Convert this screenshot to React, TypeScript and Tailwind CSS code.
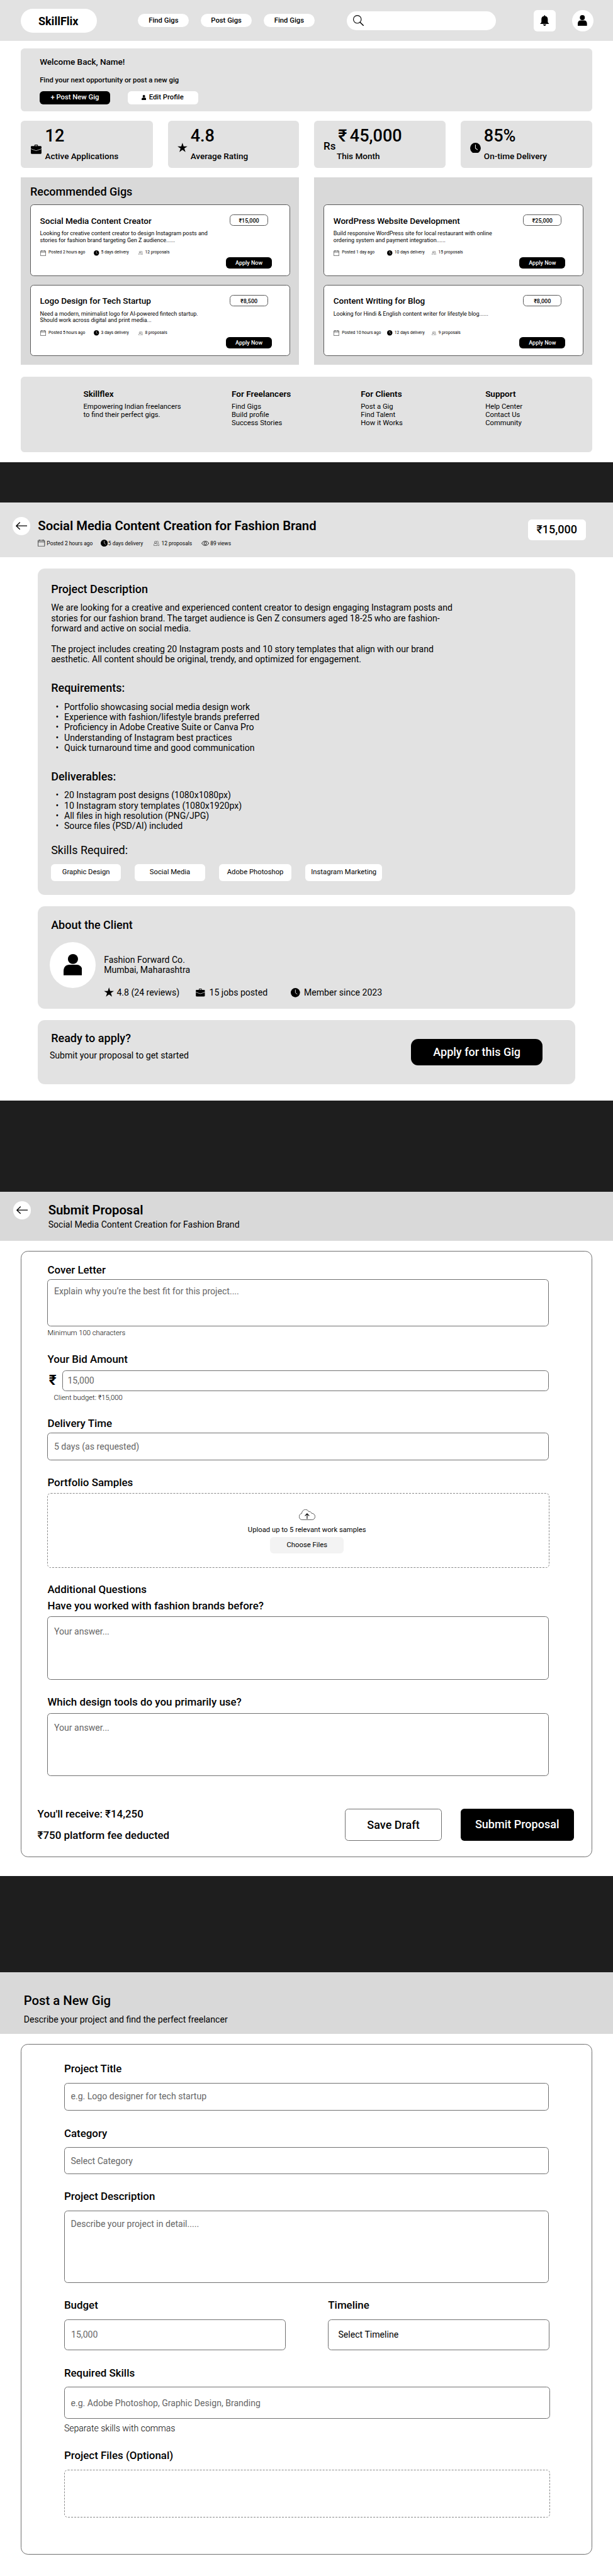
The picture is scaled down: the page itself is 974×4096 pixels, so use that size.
import React from "react";

type IconProps = { className?: string };

const UserIcon = ({ className }: IconProps) => (
  <svg viewBox="0 0 26 30" className={className} fill="#000" preserveAspectRatio="none">
    <ellipse cx="13" cy="7" rx="7" ry="7" />
    <path d="M0 30V24C0 18.5 3 15 8 15h10c5 0 8 3.500 8 9v6z" />
  </svg>
);

const BellIcon = ({ className }: IconProps) => (
  <svg viewBox="0 0 26 30" className={className} fill="#000">
    <path d="M13 0c.8 0 1.200.6 1.200 1.300v1.200C19 3 22 6.500 22 11v8c0 2 1.500 3.500 3.200 4.500V25H.8v-1.500C2.500 22.500 4 21 4 19v-8c0-4.500 3-8 7.800-8.500V1.300C11.800.6 12.200 0 13 0z" />
    <path d="M8 26.300h10L14.500 30h-3z" />
  </svg>
);

const SearchIcon = ({ className }: IconProps) => (
  <svg viewBox="0 0 30 30" className={className} fill="none" stroke="#000">
    <circle cx="12" cy="12" r="11" strokeWidth="2" />
    <path d="M19.500 20L29 29.300" strokeWidth="2.600" strokeLinecap="round" />
  </svg>
);

const BriefcaseIcon = ({ className }: IconProps) => (
  <svg viewBox="0 0 30 26" className={className} fill="#000">
    <path d="M10 4V2.500C10 1 11 0 12.500 0h5C19 0 20 1 20 2.500V4h7.500C29 4 30 5 30 6.500V11l-15 5.200L0 11V6.500C0 5 1 4 2.500 4zm2 0h6V2.300h-6z" />
    <path d="M0 12.600l15 5.200 15-5.200v10.900c0 1.500-1 2.500-2.500 2.500h-25C1 26 0 25 0 23.500z" />
  </svg>
);

const StarIcon = ({ className }: IconProps) => (
  <svg viewBox="0 0 28 26" className={className} fill="#000">
    <path d="M14 0l3.300 10H28l-8.700 6.100L22.600 26 14 19.900 5.400 26l3.300-9.900L0 10h10.700z" />
  </svg>
);

const ClockIcon = ({ className, hand = "#fff" }: IconProps & { hand?: string }) => (
  <svg viewBox="0 0 30 30" className={className}>
    <circle cx="15" cy="15" r="15" fill="#000" />
    <path d="M15 6v9.500l5.500 4" fill="none" stroke={hand} strokeWidth="2" strokeLinecap="round" />
  </svg>
);

const CalendarIcon = ({ className }: IconProps) => (
  <svg viewBox="0 0 20 20" className={className} fill="none" stroke="#000" strokeWidth="1.300">
    <rect x=".7" y="2" width="18.600" height="17.200" rx="1.500" />
    <path d="M.7 6.500h18.600M5 0v3.500M15 0v3.500" />
  </svg>
);

const PeopleIcon = ({ className }: IconProps) => (
  <svg viewBox="0 0 16 14" className={className} fill="none" stroke="#000" strokeWidth=".8">
    <circle cx="5.500" cy="4" r="3" />
    <path d="M.5 13.400v-2C.5 9 2 7.300 4.200 7h2.600c2.200.3 3.700 2 3.700 4.400v2z" />
    <path d="M8 1.400C8.600.8 9.300.5 10.200.5c1.700 0 3 1.400 3 3.200 0 1.400-.7 2.500-1.800 3 2.400.6 4.100 2.300 4.100 4.700v2h-3" />
  </svg>
);

const EyeIcon = ({ className }: IconProps) => (
  <svg viewBox="0 0 22 14" className={className} fill="none" stroke="#000" strokeWidth="1.500">
    <path d="M1 7c2.500-4 5.700-6.200 10-6.200S18.500 3 21 7c-2.500 4-5.700 6.200-10 6.200S3.500 11 1 7z" />
    <circle cx="11" cy="7" r="3.600" />
  </svg>
);

const ArrowIcon = ({ className }: IconProps) => (
  <svg viewBox="0 0 33 22" className={className} fill="none" stroke="#000" strokeWidth="2.400" strokeLinejoin="round">
    <path d="M12 1L1.500 11 12 21M1.500 11H33" />
  </svg>
);

const CloudIcon = ({ className }: IconProps) => (
  <svg viewBox="0 0 46 30" className={className} fill="none" stroke="#000">
    <path
      d="M9 29.300C4 29.300.6 25.500.6 20.500c0-4.500 2.800-8.200 7.200-9C8.500 5 13 .7 18.500.7c4 0 7.500 2.200 9 5.600 4-.5 7 1.500 8.300 4.700 5.600.3 9.600 4 9.600 9.300 0 5-3.600 9-8.600 9z"
      strokeWidth="1.100"
    />
    <path d="M23 27V13M17 18.500L23 12l6 6.500" strokeWidth="2" />
  </svg>
);

type Gig = {
  title: string;
  lines: string[];
  price: string;
  posted: string;
  delivery: string;
  proposals: string;
};

const leftGigs: Gig[] = [
  {
    title: "Social Media Content Creator",
    lines: ["Looking for creative content creator to design Instagram posts and", "stories for fashion brand targeting Gen Z audience......"],
    price: "₹15,000",
    posted: "Posted 2 hours ago",
    delivery: "5 days delivery",
    proposals: "12 proposals",
  },
  {
    title: "Logo Design for Tech Startup",
    lines: ["Need a modern, minimalist logo for AI-powered fintech startup.", "Should work across digital and print media..."],
    price: "₹8,500",
    posted: "Posted 5 hours ago",
    delivery: "3 days delivery",
    proposals: "8 proposals",
  },
];

const rightGigs: Gig[] = [
  {
    title: "WordPress Website Development",
    lines: ["Build responsive WordPress site for local restaurant with online", "ordering system and payment integration......"],
    price: "₹25,000",
    posted: "Posted 1 day ago",
    delivery: "10 days delivery",
    proposals: "15 proposals",
  },
  {
    title: "Content Writing for Blog",
    lines: ["Looking for Hindi & English content writer for lifestyle blog......"],
    price: "₹8,000",
    posted: "Posted 10 hours ago",
    delivery: "12 days delivery",
    proposals: "9 proposals",
  },
];

const GigCard = ({ gig }: { gig: Gig }) => (
  <article className="flex h-[202px] w-[733px] rounded-[10px] border border-[#5a5a5a] bg-white">
    <div className="w-[550px] shrink-0 pt-[31px] pl-[26px]">
      <h3 className="text-[24px] leading-[28px] font-medium">{gig.title}</h3>
      <p className="mt-[12px] h-[38px] text-[16px] leading-[19px]">
        {gig.lines.map((line) => (
          <span key={line} className="block">{line}</span>
        ))}
      </p>
      <div className="mt-[18px] flex h-[16px] items-center text-[12px] leading-[14px]">
        <CalendarIcon className="size-[16px]" />
        <span className="ml-[8px] w-[128px]">{gig.posted}</span>
        <ClockIcon className="size-[15px]" />
        <span className="ml-[5px] w-[105px]">{gig.delivery}</span>
        <PeopleIcon className="h-[11px] w-[13px]" />
        <span className="ml-[6px]">{gig.proposals}</span>
      </div>
    </div>
    <div className="flex w-[130px] flex-col items-center pt-[27px]">
      <span className="h-[32px] w-[109px] rounded-[10px] border border-[#5a5a5a] text-center text-[16px] leading-[33px] font-medium">{gig.price}</span>
      <button className="mt-[88px] h-[32px] w-[130px] rounded-[10px] bg-black text-[16px] leading-[32px] font-medium text-white">Apply Now</button>
    </div>
  </article>
);

const Stat = ({ icon, value, label, className }: { icon: React.ReactNode; value: React.ReactNode; label: string; className: string }) => (
  <div className={`flex h-[133px] rounded-[10px] bg-[#e2e2e2] ${className}`}>
    {icon}
    <div className="pt-[17px]">
      <div className="flex text-[48px] leading-[56px] font-medium">{value}</div>
      <div className="mt-[14px] text-[24px] leading-[28px] font-medium">{label}</div>
    </div>
  </div>
);

const FooterColumn = ({ title, links, className }: { title: string; links: string[]; className: string }) => (
  <div className={className}>
    <h4 className="text-[24px] leading-[28px] font-semibold">{title}</h4>
    <div className="mt-[10px] text-[20px] leading-[23.200px]">
      {links.map((l) => (
        <div key={l}>{l}</div>
      ))}
    </div>
  </div>
);

const Dashboard = () => (
  <section className="h-[1303px]">
    <header className="flex h-[116px] items-center bg-[#e2e2e2] pl-[59px]">
      <div className="h-[68px] w-[215px] rounded-[34px] bg-white pr-[4px] text-center text-[32px] leading-[71px] font-bold">SkillFlix</div>
      <nav className="ml-[115px] flex gap-[33px] text-[20px] leading-[38px] font-medium">
        {["Find Gigs", "Post Gigs", "Find Gigs"].map((t, i) => (
          <a key={i} className="h-[38px] w-[144px] rounded-[19px] bg-white text-center">{t}</a>
        ))}
      </nav>
      <div className="ml-[91px] flex h-[53px] w-[420px] items-center rounded-[27px] bg-white pl-[18px]">
        <SearchIcon className="size-[30px]" />
      </div>
      <div className="ml-[107px] flex size-[61px] items-center justify-center rounded-[10px] bg-white">
        <BellIcon className="h-[30px] w-[26px]" />
      </div>
      <div className="ml-[46px] flex size-[61px] items-center justify-center rounded-full bg-white">
        <UserIcon className="h-[30px] w-[26px]" />
      </div>
    </header>

    <div className="mt-[20px] ml-[59px] h-[178px] w-[1611px] rounded-[10px] bg-[#e2e2e2] pt-[25px] pl-[53px]">
      <h1 className="text-[24px] leading-[28px] font-medium">Welcome Back, Name!</h1>
      <p className="mt-[28px] text-[20px] leading-[23px] font-medium">Find your next opportunity or post a new gig</p>
      <div className="mt-[17px] flex gap-[50px] text-[20px] leading-[37px] font-medium">
        <button className="h-[37px] w-[198px] rounded-[10px] bg-black text-white">+ Post New Gig</button>
        <button className="flex h-[37px] w-[198px] items-center rounded-[10px] bg-white pl-[39px]">
          <UserIcon className="h-[15px] w-[13px]" />
          <span className="ml-[8px]">Edit Profile</span>
        </button>
      </div>
    </div>

    <div className="mt-[26px] ml-[59px] flex">
      <Stat className="w-[372px] pl-[28px]" icon={<BriefcaseIcon className="mt-[68px] mr-[10px] h-[26px] w-[30px]" />} value="12" label="Active Applications" />
      <Stat className="ml-[42px] w-[370px] pl-[28px]" icon={<StarIcon className="mt-[63px] mr-[8px] h-[26px] w-[28px]" />} value="4.8" label="Average Rating" />
      <Stat
        className="ml-[43px] w-[370px] pl-[26px]"
        icon={<span className="mt-[56px] w-[37px] text-[30px] leading-[35px] font-medium">Rs</span>}
        value={
          <>
            <span className="ml-[4px] w-[33px]">₹</span>
            <span>45,000</span>
          </>
        }
        label="This Month"
      />
      <Stat className="ml-[42px] w-[372px] pl-[28px]" icon={<ClockIcon hand="#e2e2e2" className="mt-[62px] mr-[8px] size-[30px]" />} value="85%" label="On-time Delivery" />
    </div>

    <div className="mt-[27px] ml-[59px] flex gap-[43px]">
      <div className="h-[529px] w-[784px] bg-[#d9d9d9] pt-[22px] pl-[26px]">
        <h2 className="text-[32px] leading-[38px] font-medium">Recommended Gigs</h2>
        <div className="mt-[17px] flex flex-col gap-[24px]">
          {leftGigs.map((g) => (
            <GigCard key={g.title} gig={g} />
          ))}
        </div>
      </div>
      <div className="flex h-[529px] w-[784px] flex-col gap-[24px] bg-[#d9d9d9] pt-[77px] pl-[26px]">
        {rightGigs.map((g) => (
          <GigCard key={g.title} gig={g} />
        ))}
      </div>
    </div>

    <footer className="mt-[34px] ml-[59px] flex h-[213px] w-[1611px] rounded-[10px] bg-[#e2e2e2] pt-[35px] pl-[176px]">
      <FooterColumn className="w-[418px]" title="Skillflex" links={["Empowering Indian freelancers", "to find their perfect gigs."]} />
      <FooterColumn className="w-[364px]" title="For Freelancers" links={["Find Gigs", "Build profile", "Success Stories"]} />
      <FooterColumn className="w-[351px]" title="For Clients" links={["Post a Gig", "Find Talent", "How it Works"]} />
      <FooterColumn className="" title="Support" links={["Help Center", "Contact Us", "Community"]} />
    </footer>
  </section>
);

const requirements = [
  "Portfolio showcasing social media design work",
  "Experience with fashion/lifestyle brands preferred",
  "Proficiency in Adobe Creative Suite or Canva Pro",
  "Understanding of Instagram best practices",
  "Quick turnaround time and good communication",
];

const deliverables = [
  "20 Instagram post designs (1080x1080px)",
  "10 Instagram story templates (1080x1920px)",
  "All files in high resolution (PNG/JPG)",
  "Source files (PSD/AI) included",
];

const Bullets = ({ items }: { items: string[] }) => (
  <ul>
    {items.map((t) => (
      <li key={t} className="flex">
        <span className="w-[37px] pl-[13px]">•</span>
        {t}
      </li>
    ))}
  </ul>
);

const GigDetail = () => (
  <section className="h-[1686px]">
    <header className="flex h-[154px] bg-[#e2e2e2] pl-[35px]">
      <div className="mt-[41px] flex size-[50px] items-center justify-center rounded-full bg-white">
        <ArrowIcon className="h-[22px] w-[33px]" />
      </div>
      <div className="ml-[22px] w-[1381px] pt-[45px]">
        <h1 className="text-[36px] leading-[42px] font-semibold">Social Media Content Creation for Fashion Brand</h1>
        <div className="mt-[16px] flex h-[22px] items-center text-[15px] leading-[18px]">
          <CalendarIcon className="size-[20px]" />
          <span className="ml-[5px] w-[152px] pt-[1px]">Posted 2 hours ago</span>
          <ClockIcon className="size-[20px]" hand="#e2e2e2" />
          <span className="ml-[1px] w-[128px]">5 days delivery</span>
          <PeopleIcon className="h-[14px] w-[16px]" />
          <span className="ml-[6px] w-[112px]">12 proposals</span>
          <EyeIcon className="h-[14px] w-[22px]" />
          <span className="ml-[4px]">89 views</span>
        </div>
      </div>
      <div className="mt-[47px] h-[58px] w-[163px] rounded-[10px] bg-white text-center text-[32px] leading-[58px] font-medium">₹15,000</div>
    </header>

    <div className="mt-[32px] ml-[107px] h-[921px] w-[1514px] rounded-[20px] bg-[#e2e2e2] pt-[38px] pl-[37px] text-[25px] leading-[29px]">
      <h2 className="text-[32px] leading-[38px] font-medium">Project Description</h2>
      <p className="mt-[20px]">
        We are looking for a creative and experienced content creator to design engaging Instagram posts and
        <br />
        stories for our fashion brand. The target audience is Gen Z consumers aged 18-25 who are fashion-
        <br />
        forward and active on social media.
      </p>
      <p className="mt-[29px]">
        The project includes creating 20 Instagram posts and 10 story templates that align with our brand
        <br />
        aesthetic. All content should be original, trendy, and optimized for engagement.
      </p>
      <h3 className="mt-[48px] mb-[19px] text-[32px] leading-[38px] font-medium">Requirements:</h3>
      <Bullets items={requirements} />
      <h3 className="mt-[48px] mb-[19px] text-[32px] leading-[38px] font-medium">Deliverables:</h3>
      <Bullets items={deliverables} />
      <h3 className="mt-[34px] text-[32px] leading-[38px]">Skills Required:</h3>
      <div className="mt-[21px] flex text-center text-[20px] leading-[47px]">
        <span className="h-[47px] w-[197px] rounded-[10px] bg-white">Graphic Design</span>
        <span className="ml-[39px] h-[47px] w-[198px] rounded-[10px] bg-white">Social Media</span>
        <span className="ml-[39px] h-[47px] w-[205px] rounded-[10px] bg-white">Adobe Photoshop</span>
        <span className="ml-[39px] h-[47px] w-[216px] rounded-[10px] bg-white">Instagram Marketing</span>
      </div>
    </div>

    <div className="mt-[32px] ml-[107px] h-[288px] w-[1514px] rounded-[20px] bg-[#e2e2e2] pt-[33px] pl-[33px]">
      <h2 className="pl-[4px] text-[32px] leading-[38px] font-medium">About the Client</h2>
      <div className="mt-[29px] flex">
        <div className="flex size-[130px] items-center justify-center rounded-full bg-white">
          <UserIcon className="h-[60px] w-[53px]" />
        </div>
        <div className="pt-[36px] pl-[23px] text-[25px] leading-[29px]">
          <p>Fashion Forward Co.</p>
          <p>Mumbai, Maharashtra</p>
          <div className="mt-[35px] flex h-[29px] items-center">
            <StarIcon className="-mt-[3px] h-[26px] w-[29px]" />
            <span className="ml-[7px] w-[223px]">4.8 (24 reviews)</span>
            <BriefcaseIcon className="h-[22px] w-[26px]" />
            <span className="ml-[12px] w-[230px]">15 jobs posted</span>
            <ClockIcon className="size-[26px]" hand="#e2e2e2" />
            <span className="ml-[11px]">Member since 2023</span>
          </div>
        </div>
      </div>
    </div>

    <div className="mt-[32px] ml-[107px] flex h-[182px] w-[1514px] rounded-[20px] bg-[#e2e2e2]">
      <div className="w-[1051px] pt-[33px] pl-[33px]">
        <h2 className="pl-[4px] text-[32px] leading-[38px] font-medium">Ready to apply?</h2>
        <p className="mt-[15px] text-[25px] leading-[29px]">Submit your proposal to get started</p>
      </div>
      <button className="mt-[54px] h-[74px] w-[372px] rounded-[20px] bg-black text-[32px] leading-[73px] font-medium text-white">Apply for this Gig</button>
    </div>
  </section>
);

const label = "text-[30px] leading-[35px] font-medium";
const field = "rounded-[10px] border border-[#707070] text-[25px] leading-[29px] text-[#666]";

const SubmitProposal = () => (
  <section className="h-[1931px]">
    <header className="flex h-[139px] bg-[#d9d9d9] pl-[37px]">
      <div className="mt-[28px] flex size-[50px] items-center justify-center rounded-full bg-white">
        <ArrowIcon className="h-[22px] w-[33px]" />
      </div>
      <div className="ml-[49px] pt-[32px]">
        <h1 className="text-[36px] leading-[42px] font-semibold">Submit Proposal</h1>
        <p className="mt-[5px] text-[25px] leading-[29px]">Social Media Content Creation for Fashion Brand</p>
      </div>
    </header>

    <form className="mt-[28px] ml-[58px] h-[1711px] w-[1612px] rounded-[20px] border border-[#707070] pt-[36px] pl-[74px]">
      <h2 className={label}>Cover Letter</h2>
      <div className={`mt-[8px] h-[132px] w-[1414px] pt-[17px] pl-[17px] ${field}`}>Explain why you’re the best fit for this project....</div>
      <p className="mt-[7px] text-[20px] leading-[24px] font-light">Minimum 100 characters</p>

      <h2 className={`mt-[46px] ${label}`}>Your Bid Amount</h2>
      <div className="mt-[13px] flex">
        <span className="w-[42px] pt-[5px] pl-[4px] text-[40px] leading-[46px] font-bold">₹</span>
        <div className={`h-[58px] w-[1372px] pt-[12px] pl-[13px] ${field}`}>15,000</div>
      </div>
      <p className="mt-[7px] pl-[18px] text-[20px] leading-[24px] font-light">Client budget: ₹15,000</p>

      <h2 className={`mt-[43px] ${label}`}>Delivery Time</h2>
      <div className={`mt-[9px] h-[77px] w-[1414px] pt-[22px] pl-[17px] ${field}`}>5 days (as requested)</div>

      <h2 className={`mt-[46px] ${label}`}>Portfolio Samples</h2>
      <div className="mt-[11px] flex h-[212px] w-[1415px] flex-col items-center rounded-[10px] border border-dashed border-[#888] pt-[46px] pl-[48px] text-[20px] leading-[24px]">
        <CloudIcon className="h-[30px] w-[46px]" />
        <p className="mt-[15px]">Upload up to 5 relevant work samples</p>
        <button className="mt-[9px] h-[46px] w-[208px] rounded-[10px] bg-[#f3f3f3] leading-[46px]">Choose Files</button>
      </div>

      <h2 className={`mt-[45px] ${label}`}>Additional Questions</h2>
      <h2 className={`mt-[10px] ${label}`}>Have you worked with fashion brands before?</h2>
      <div className={`mt-[12px] h-[179px] w-[1414px] pt-[26px] pl-[17px] ${field}`}>Your answer...</div>

      <h2 className={`mt-[45px] ${label}`}>Which design tools do you primarily use?</h2>
      <div className={`mt-[13px] h-[179px] w-[1414px] pt-[26px] pl-[17px] ${field}`}>Your answer...</div>

      <div className="mt-[90px] -ml-[28px] flex">
        <div className="w-[867px]">
          <p className={label}>You'll receive: ₹14,250</p>
          <p className={`mt-[25px] ${label}`}>₹750 platform fee deducted</p>
        </div>
        <button className="mt-[1px] h-[90px] w-[272px] rounded-[10px] border border-[#707070] text-[32px] leading-[88px] font-medium">Save Draft</button>
        <button className="mt-[1px] ml-[53px] h-[90px] w-[320px] rounded-[10px] bg-black text-[32px] leading-[90px] font-medium text-white">Submit Proposal</button>
      </div>
    </form>
  </section>
);

const PostGig = () => (
  <section className="h-[1702px]">
    <header className="h-[173px] bg-[#d9d9d9] pt-[60px] pl-[67px]">
      <h1 className="text-[36px] leading-[42px] font-medium">Post a New Gig</h1>
      <p className="mt-[16px] text-[25px] leading-[29px]">Describe your project and find the perfect freelancer</p>
    </header>

    <form className="mt-[29px] ml-[58px] h-[1440px] w-[1612px] rounded-[20px] border border-[#707070] pt-[50px] pl-[121px]">
      <h2 className={label}>Project Title</h2>
      <div className={`mt-[22px] h-[78px] w-[1367px] pt-[22px] pl-[17px] ${field}`}>e.g. Logo designer for tech startup</div>

      <h2 className={`mt-[48px] ${label}`}>Category</h2>
      <div className={`mt-[21px] h-[76px] w-[1367px] pt-[23px] pl-[17px] ${field}`}>Select Category</div>

      <h2 className={`mt-[46px] ${label}`}>Project Description</h2>
      <div className={`mt-[22px] h-[204px] w-[1367px] pt-[22px] pl-[17px] ${field}`}>Describe your project in detail.....</div>

      <div className="mt-[46px] flex gap-[120px]">
        <div>
          <h2 className={label}>Budget</h2>
          <div className={`mt-[21px] h-[88px] w-[624px] pt-[28px] pl-[18px] ${field}`}>15,000</div>
        </div>
        <div>
          <h2 className={label}>Timeline</h2>
          <div className="mt-[21px] h-[88px] w-[624px] rounded-[10px] border border-[#707070] pt-[28px] pl-[27px] text-[25px] leading-[29px] text-black">Select Timeline</div>
        </div>
      </div>

      <h2 className={`mt-[47px] ${label}`}>Required Skills</h2>
      <div className={`mt-[21px] h-[90px] w-[1369px] pt-[29px] pl-[17px] ${field}`}>e.g. Adobe Photoshop, Graphic Design, Branding</div>
      <p className="mt-[12px] text-[25px] leading-[29px] font-light">Separate skills with commas</p>

      <h2 className={`mt-[46px] ${label}`}>Project Files (Optional)</h2>
      <div className="mt-[22px] h-[134px] w-[1369px] rounded-[10px] border border-dashed border-[#888]" />
    </form>
  </section>
);

export default function App() {
  return (
    <div className="h-[4096px] w-[974px] overflow-hidden bg-white">
      <div className="w-[1728px] bg-white font-['Roboto',sans-serif] whitespace-nowrap text-black [zoom:0.56372]">
        <Dashboard />
        <div className="h-[115px] bg-[#1e1e1e]" />
        <GigDetail />
        <div className="h-[257px] bg-[#1e1e1e]" />
        <SubmitProposal />
        <div className="h-[272px] bg-[#1e1e1e]" />
        <PostGig />
      </div>
    </div>
  );
}
